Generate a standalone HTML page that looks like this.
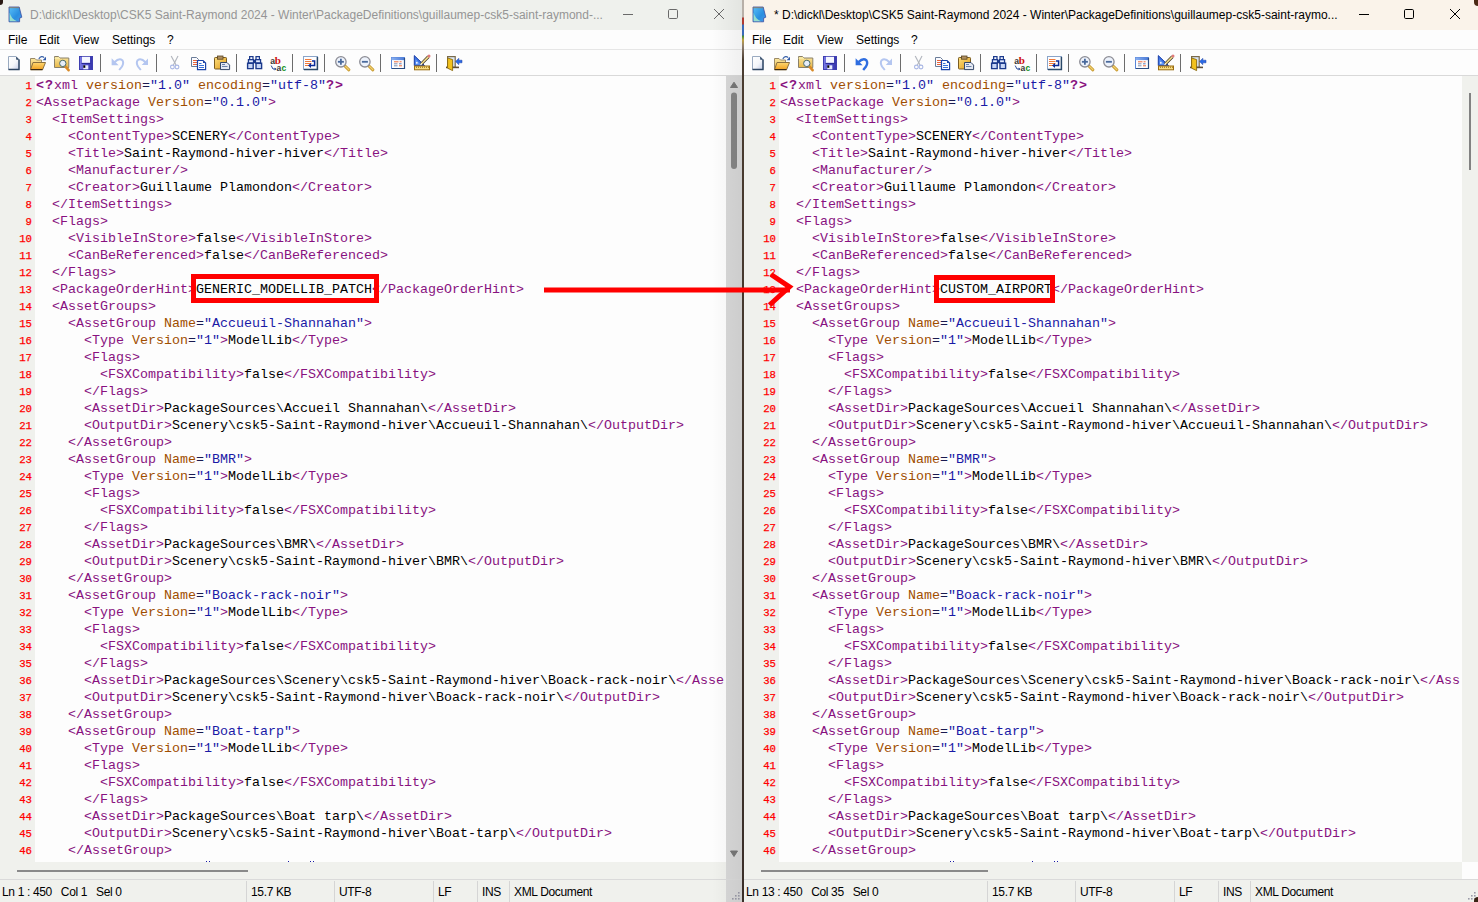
<!DOCTYPE html>
<html><head><meta charset="utf-8"><style>
*{margin:0;padding:0;box-sizing:border-box}
html,body{width:1478px;height:902px;overflow:hidden;background:#3b3222}
body{position:relative;font-family:"Liberation Sans",sans-serif}
.win{position:absolute;top:0;height:902px;background:#fdfdfd;overflow:hidden}
.title{position:absolute;left:0;top:0;right:0;height:30px;background:#eff1ed}
.act .title{background:#faf3ea}
.appicon{position:absolute;left:9px;top:7px;width:14px;height:15px}
.ttext{position:absolute;left:30px;top:8px;font-size:12px;color:#959595;white-space:nowrap;letter-spacing:0}
.act .ttext{color:#000}
.cbtn{position:absolute;top:0;width:16px;height:30px}
.menu{position:absolute;left:0;top:30px;right:0;height:19px;background:#fdfdfd;font-size:12px;color:#000}
.menu span{position:absolute;top:3px}
.dots{position:absolute;left:0;right:0;top:49px;height:1px;background:#e6e6e6}
.toolbar{position:absolute;left:0;right:0;top:50px;height:25px;background:#fdfdfd}
.tbline{position:absolute;left:0;right:0;top:75px;height:1px;background:#d9d9d9}
.editor{position:absolute;left:0;top:76px;height:786px;overflow:hidden;background:#fdfdfd}
.gutter{position:absolute;left:0;top:0;width:35px;height:786px;background:#f0f1ed}
.nm{position:absolute;right:3px;height:17px;line-height:17px;font-family:"Liberation Mono",monospace;font-size:10.67px;color:#f00;margin-top:2px;-webkit-text-stroke:0.25px #f00}
.code{position:absolute;left:36px;top:0;height:786px;overflow:hidden}
.ln{position:absolute;left:0;height:17px;line-height:17px;margin-top:1px;white-space:pre;font-family:"Liberation Mono",monospace;font-size:13.333px;color:#000}
.ln i,.ln b{font-style:normal}
.t{color:#881280}
.a{color:#a04e00}
.e{color:#1a1a50}
.v{color:#1a1aa6}
b.t{font-weight:bold;letter-spacing:1px}
.vscroll{position:absolute;top:76px;width:16px;height:803px;background:#f0f1ed}
.hscroll{position:absolute;left:0;top:862px;height:17px;background:#f0f1ed}
.hthumb{position:absolute;left:17px;top:8px;width:231px;height:2px;background:#8a8a8a}
.status{position:absolute;left:0;right:0;top:879px;height:23px;background:#f0f1ed;border-top:1px solid #dadada;font-size:12px;color:#000}
.status span{position:absolute;top:5px;white-space:nowrap;letter-spacing:-0.35px}
.status .sep{position:absolute;top:1px;width:1px;height:22px;background:#d5d5d5}
.box{position:absolute;border:5px solid #f00}
.dot{position:absolute;width:1px;height:1px;background:#1a1aa6;top:785px}
.shadow{position:absolute;left:712px;top:0;width:30px;height:902px;background:linear-gradient(to right,rgba(0,0,0,0),rgba(0,0,0,0.05))}
.divider{position:absolute;left:742px;top:0;width:2px;height:902px;background:linear-gradient(to bottom,#b8b0a8 0,#b8b0a8 17px,#b03a30 18px,#b03a30 24px,#3a6ab8 25px,#3a6ab8 35px,#3a8a3a 36px,#c0a040 40px,#908070 46px,#4a3c30 60px,#3a2e28 100%)}
.tb{position:absolute;left:0;top:0}

</style></head>
<body>
<div class="win" style="left:0px;width:742px">
  <div class=title>
    <div class=appicon><svg width="16" height="17" viewBox="8 6 16 17" style="position:absolute;left:-1px;top:-1px">
<defs><linearGradient id="gapp" x1="0" y1="0" x2="1" y2="1"><stop offset="0" stop-color="#58c0f8"/><stop offset="0.6" stop-color="#2a8ee0"/><stop offset="1" stop-color="#4a9ae8"/></linearGradient></defs>
<path d="M9,7 H19.2 L21.8,17.2 L19.6,18.2 V21.8 H9 Z" fill="url(#gapp)" stroke="#3a4ca0" stroke-width="0.8"/>
<path d="M9.6,12.5 V21.2 H17 Q11,19 9.6,12.5 Z" fill="#b0f0c8" opacity="0.8"/>
<path d="M9.5,7.6 H19" stroke="#b07a3a" stroke-width="1.2" stroke-dasharray="1,1"/>
</svg></div>
    <div class=ttext>D:\dickl\Desktop\CSK5 Saint-Raymond 2024 - Winter\PackageDefinitions\guillaumep-csk5-saint-raymond-...</div>
    <svg width="742" height="30" style="position:absolute;left:0;top:0">
<line x1="623" y1="14.5" x2="633" y2="14.5" stroke="#6a6a6a" stroke-width="1"/>
<rect x="668.5" y="9.5" width="9" height="9" rx="1.2" fill="none" stroke="#6a6a6a" stroke-width="1"/>
<line x1="714" y1="9" x2="724" y2="19" stroke="#6a6a6a" stroke-width="1"/>
<line x1="724" y1="9" x2="714" y2="19" stroke="#6a6a6a" stroke-width="1"/>
</svg>
  </div>
  <div class=menu><span style="left:8px">File</span><span style="left:39px">Edit</span><span style="left:73px">View</span><span style="left:112px">Settings</span><span style="left:167px">?</span></div>
  <div class=dots></div>
  <div class=toolbar><svg class=tb width="470" height="25" viewBox="0 0 470 25"><line x1="100.5" y1="4" x2="100.5" y2="22" stroke="#6c6c6c" stroke-width="1"/><line x1="156.5" y1="4" x2="156.5" y2="22" stroke="#6c6c6c" stroke-width="1"/><line x1="236.5" y1="4" x2="236.5" y2="22" stroke="#6c6c6c" stroke-width="1"/><line x1="292.5" y1="4" x2="292.5" y2="22" stroke="#6c6c6c" stroke-width="1"/><line x1="324.5" y1="4" x2="324.5" y2="22" stroke="#6c6c6c" stroke-width="1"/><line x1="380.5" y1="4" x2="380.5" y2="22" stroke="#6c6c6c" stroke-width="1"/><line x1="436.5" y1="4" x2="436.5" y2="22" stroke="#6c6c6c" stroke-width="1"/><defs>
<linearGradient id="gdoc" x1="0" y1="0" x2="1" y2="1"><stop offset="0" stop-color="#ffffff"/><stop offset="0.55" stop-color="#f4f6fa"/><stop offset="1" stop-color="#c4cce8"/></linearGradient>
<linearGradient id="gfold" x1="0" y1="0" x2="0" y2="1"><stop offset="0" stop-color="#fbe7a0"/><stop offset="1" stop-color="#e8b848"/></linearGradient>
<linearGradient id="gflap" x1="0" y1="0" x2="0" y2="1"><stop offset="0" stop-color="#ffd870"/><stop offset="1" stop-color="#f0a020"/></linearGradient>
<linearGradient id="gsave" x1="0" y1="0" x2="1" y2="0"><stop offset="0" stop-color="#8080e8"/><stop offset="0.5" stop-color="#5050c8"/><stop offset="1" stop-color="#3434a8"/></linearGradient>
<linearGradient id="gclip" x1="0" y1="0" x2="1" y2="1"><stop offset="0" stop-color="#fde080"/><stop offset="1" stop-color="#e09a18"/></linearGradient>
<linearGradient id="gbar" x1="0" y1="0" x2="1" y2="0"><stop offset="0" stop-color="#8ab0f0"/><stop offset="1" stop-color="#4a7ad8"/></linearGradient>
</defs><path d="M8.5,6.5 H16 L19,9.5 V19.5 H8.5 Z" fill="url(#gdoc)" stroke="#9aaac0" stroke-width="1"/><path d="M19,9.5 V19.5 H8.5" fill="none" stroke="#2c4462" stroke-width="1.4"/><path d="M16,6.5 L19.2,9.7 L16.3,9.7 Z" fill="#2c4462"/><path d="M30.5,8.5 H35 L36.5,10 H41.5 V19.5 H30.5 Z" fill="url(#gfold)" stroke="#9a8a68" stroke-width="1"/><path d="M33,12.5 H45.5 L42.5,19.8 H30.5 Z" fill="url(#gflap)" stroke="#8a7040" stroke-width="1"/><path d="M30.8,19.6 H42.5" stroke="#302010" stroke-width="1"/><path d="M38.8,8.8 Q41.5,5.2 44.2,7.6" fill="none" stroke="#3a62a8" stroke-width="1.2"/><path d="M46,6.8 L46,10.2 L42.6,10.2 Z" fill="#2e58a8"/><path d="M54.5,6.5 H58.5 L60,8 H68.8 V17.5 H54.5 Z" fill="url(#gfold)" stroke="#8a8068" stroke-width="1"/><path d="M54.5,8.2 H60" stroke="#f8f0b0" stroke-width="1"/><line x1="65.3" y1="16.3" x2="68.6" y2="20.2" stroke="#d88a28" stroke-width="2.6" stroke-linecap="round"/><circle cx="62.8" cy="13.4" r="3.2" fill="#e6eefa" stroke="#4a6a68" stroke-width="1"/><rect x="79" y="6" width="14" height="14" fill="url(#gsave)"/><rect x="79.5" y="6.5" width="13" height="13" fill="none" stroke="#3e3eb0" stroke-width="1"/><rect x="82" y="6.8" width="8" height="6" fill="#f4f6ff"/><rect x="81.5" y="13" width="9" height="1" fill="#2a2a98"/><rect x="83.3" y="15.3" width="5" height="4" fill="#e8ecff"/><rect x="83.3" y="15.3" width="2" height="2.5" fill="#000"/><path d="M111.6,8.3 L111.6,15.3 L118.6,15.3 Z" fill="#b4c6f0"/><path d="M114.5,12.2 Q119,7.6 122.3,10.2 Q124.2,12.8 122,16.5 L119.2,20" fill="none" stroke="#b4c6f0" stroke-width="2"/><path d="M148,8.5 L148,15 L141.7,15 Z" fill="#b4c6f0"/><path d="M145.5,12.2 Q141,7.6 137.7,10.2 Q135.8,12.8 138,16.5 L140.8,20" fill="none" stroke="#b4c6f0" stroke-width="2"/><line x1="171.2" y1="6" x2="176" y2="15" stroke="#b0b4bc" stroke-width="1.1"/><line x1="178" y1="6" x2="173.4" y2="15" stroke="#b0b4bc" stroke-width="1.1"/><circle cx="172.4" cy="17" r="1.9" fill="none" stroke="#a8b6e4" stroke-width="1.1"/><circle cx="177" cy="17" r="1.9" fill="none" stroke="#a8b6e4" stroke-width="1.1"/><path d="M191.5,7.5 H196.5 L198.5,9.5 V16.5 H191.5 Z" fill="#fbfbff" stroke="#6a7c98" stroke-width="1"/><line x1="193" y1="10.5" x2="197.5" y2="10.5" stroke="#e8643a" stroke-width="1"/><line x1="193" y1="12.5" x2="197.5" y2="12.5" stroke="#e8643a" stroke-width="1"/><line x1="193" y1="14.5" x2="197.5" y2="14.5" stroke="#e8643a" stroke-width="1"/><path d="M197.5,10.5 H203 L205.6,13.1 V19.6 H197.5 Z" fill="#fdfdff" stroke="#1c44a8" stroke-width="1.2"/><path d="M203,10.5 L205.6,13.1 H203 Z" fill="#1c44a8"/><line x1="199" y1="13.5" x2="201.5" y2="13.5" stroke="#3a72d8" stroke-width="1"/><line x1="199" y1="15.5" x2="204" y2="15.5" stroke="#3a72d8" stroke-width="1"/><line x1="199" y1="17.5" x2="204" y2="17.5" stroke="#3a72d8" stroke-width="1"/><rect x="214.5" y="7.5" width="12" height="11.5" rx="0.8" fill="url(#gclip)" stroke="#7a5c22" stroke-width="1"/><rect x="217.5" y="6" width="5.5" height="3.2" fill="#b09060" stroke="#5a4422" stroke-width="0.8"/><path d="M220.5,12.5 H227 L229.6,15.1 V19.6 H220.5 Z" fill="#e4e8f2" stroke="#34486a" stroke-width="1"/><line x1="222" y1="14.5" x2="225" y2="14.5" stroke="#6a80a8" stroke-width="1"/><line x1="222" y1="16.5" x2="227.5" y2="16.5" stroke="#6a80a8" stroke-width="1"/><path d="M249.6,6.6 H253 V9.6 H249.6 Z" fill="#e8eeff" stroke="#1c3a8c" stroke-width="1.2"/><path d="M248.4,9.6 H253.6 V13.2 H248.4 Z" fill="#b8c8f0" stroke="#1c3a8c" stroke-width="1.2"/><path d="M247.6,13.2 H253.2 V18.6 H247.6 Z" fill="#c8d6f6" stroke="#1c3a8c" stroke-width="1.4"/><path d="M256,6.6 H259.4 V9.6 H256 Z" fill="#e8eeff" stroke="#1c3a8c" stroke-width="1.2"/><path d="M255.4,9.6 H260.6 V13.2 H255.4 Z" fill="#b8c8f0" stroke="#1c3a8c" stroke-width="1.2"/><path d="M256,13.2 H261.6 V18.6 H256 Z" fill="#c8d6f6" stroke="#1c3a8c" stroke-width="1.4"/><rect x="253" y="10" width="3" height="3" fill="#1c3a8c"/><rect x="251" y="7.6" width="1" height="1" fill="#fff"/><rect x="257.4" y="7.6" width="1" height="1" fill="#fff"/><rect x="249.5" y="10.8" width="3" height="1" fill="#f4f8ff"/><rect x="256.5" y="10.8" width="3" height="1" fill="#f4f8ff"/><text x="270.3" y="64" transform="translate(0,-50)" font-family="Liberation Sans" font-weight="bold" font-size="8.6" fill="#383838">a</text><text x="274.8" y="64" transform="translate(0,-50)" font-family="Liberation Serif" font-weight="bold" font-size="11" fill="#d01010">b</text><path d="M271.2,15.6 L273,19 H276" fill="none" stroke="#2a4a98" stroke-width="1"/><path d="M276.5,19 L274.6,17.6 V20.4 Z" fill="#2a4a98"/><text x="276.4" y="70.8" transform="translate(0,-50)" font-family="Liberation Sans" font-weight="bold" font-size="8.5" fill="#383838">a</text><text x="281.6" y="70.8" transform="translate(0,-50)" font-family="Liberation Sans" font-weight="bold" font-size="8.5" fill="#10901a">c</text><rect x="303.5" y="6.5" width="14" height="13" fill="#fdfdff" stroke="#8aa4c8" stroke-width="1"/><path d="M317.4,7 V19.4 H304" fill="none" stroke="#2a4868" stroke-width="1.5"/><line x1="305" y1="9.5" x2="311.5" y2="9.5" stroke="#f07a3a" stroke-width="1"/><line x1="305" y1="11.5" x2="311.5" y2="11.5" stroke="#f07a3a" stroke-width="1"/><line x1="305" y1="13.5" x2="311.5" y2="13.5" stroke="#f07a3a" stroke-width="1"/><line x1="305" y1="15.5" x2="309.5" y2="15.5" stroke="#f07a3a" stroke-width="1"/><path d="M312,11 H314.6 V15.5 H310.5" fill="none" stroke="#0a2a98" stroke-width="1.5"/><path d="M308,15.5 L311,13 V18 Z" fill="#0a2a98"/><line x1="345.29999999999995" y1="16.3" x2="348.9" y2="19.8" stroke="#c89a30" stroke-width="3" stroke-linecap="round"/><line x1="345.29999999999995" y1="16.3" x2="348.9" y2="19.8" stroke="#f0d070" stroke-width="1.2" stroke-linecap="round"/><circle cx="340.9" cy="11.8" r="5.2" fill="#edf2fb" stroke="#8c8c94" stroke-width="1.3"/><line x1="337.9" y1="11.8" x2="343.9" y2="11.8" stroke="#4a6a9c" stroke-width="1.8"/><line x1="340.9" y1="8.8" x2="340.9" y2="14.8" stroke="#4a6a9c" stroke-width="1.8"/><line x1="369.29999999999995" y1="16.3" x2="372.9" y2="19.8" stroke="#c89a30" stroke-width="3" stroke-linecap="round"/><line x1="369.29999999999995" y1="16.3" x2="372.9" y2="19.8" stroke="#f0d070" stroke-width="1.2" stroke-linecap="round"/><circle cx="364.9" cy="11.8" r="5.2" fill="#edf2fb" stroke="#8c8c94" stroke-width="1.3"/><line x1="361.9" y1="11.8" x2="367.9" y2="11.8" stroke="#4a6a9c" stroke-width="1.8"/><rect x="391.5" y="7.5" width="13" height="11" fill="#fdfdff" stroke="#5a86d8" stroke-width="1"/><rect x="391.5" y="7.5" width="13" height="2.6" fill="url(#gbar)"/><path d="M404.5,8 V18.5 H392" fill="none" stroke="#2c4c80" stroke-width="1.2"/><line x1="394" y1="11.8" x2="398.5" y2="11.8" stroke="#f06a3a" stroke-width="1"/><line x1="399.6" y1="11.8" x2="401.6" y2="11.8" stroke="#f06a3a" stroke-width="1"/><line x1="394" y1="13.8" x2="397.5" y2="13.8" stroke="#8090b0" stroke-width="1"/><line x1="399" y1="13.8" x2="401.6" y2="13.8" stroke="#6080b8" stroke-width="1"/><line x1="394" y1="15.8" x2="397.5" y2="15.8" stroke="#8090b0" stroke-width="1"/><line x1="399" y1="15.8" x2="402" y2="15.8" stroke="#f06a3a" stroke-width="1"/><path d="M414.3,5.6 L414.3,15.6 L424.6,15.6 Z" fill="#3c74e4" stroke="#1a3ea8" stroke-width="1"/><path d="M415.6,9.2 L415.6,14.4 L420.6,14.4 Z" fill="#6a9cf4"/><circle cx="416.8" cy="12.8" r="0.9" fill="#fff"/><rect x="414.5" y="16" width="15" height="3.8" fill="#f8dc80" stroke="#9a6c10" stroke-width="1"/><line x1="416.5" y1="16.5" x2="416.5" y2="18" stroke="#a07418" stroke-width="0.8"/><line x1="418.5" y1="16.5" x2="418.5" y2="18" stroke="#a07418" stroke-width="0.8"/><line x1="420.5" y1="16.5" x2="420.5" y2="18" stroke="#a07418" stroke-width="0.8"/><line x1="422.5" y1="16.5" x2="422.5" y2="18" stroke="#a07418" stroke-width="0.8"/><line x1="424.5" y1="16.5" x2="424.5" y2="18" stroke="#a07418" stroke-width="0.8"/><line x1="426.5" y1="16.5" x2="426.5" y2="18" stroke="#a07418" stroke-width="0.8"/><line x1="428.5" y1="16.5" x2="428.5" y2="18" stroke="#a07418" stroke-width="0.8"/><line x1="421" y1="14.2" x2="428.5" y2="6.6" stroke="#3a3020" stroke-width="3"/><line x1="421" y1="14.2" x2="428.5" y2="6.6" stroke="#f4dc8a" stroke-width="1.6"/><circle cx="429" cy="6" r="1.5" fill="#e07a7a"/><path d="M420,15.2 L421.2,13 L422.4,14.2 Z" fill="#fff"/><rect x="447.6" y="6.6" width="7.6" height="10.8" fill="#dae6f6" stroke="#7a6a4a" stroke-width="1.2"/><line x1="446" y1="17.4" x2="459" y2="17.4" stroke="#5e4e38" stroke-width="1.6"/><path d="M447.6,8 L452.6,9.6 L452.6,20.6 L447.6,18.2 Z" fill="#f2c21e" stroke="#8a6a10" stroke-width="0.9"/><path d="M455.6,11.5 L458.8,8.3 V10.2 H462 V12.8 H458.8 V14.7 Z" fill="#2a6ae8" stroke="#1a3ea0" stroke-width="0.5"/></svg></div>
  <div class=tbline></div>
  <div class=editor style="width:726px">
    <div class=gutter><div class=nm style="top:0px">1</div><div class=nm style="top:17px">2</div><div class=nm style="top:34px">3</div><div class=nm style="top:51px">4</div><div class=nm style="top:68px">5</div><div class=nm style="top:85px">6</div><div class=nm style="top:102px">7</div><div class=nm style="top:119px">8</div><div class=nm style="top:136px">9</div><div class=nm style="top:153px">10</div><div class=nm style="top:170px">11</div><div class=nm style="top:187px">12</div><div class=nm style="top:204px">13</div><div class=nm style="top:221px">14</div><div class=nm style="top:238px">15</div><div class=nm style="top:255px">16</div><div class=nm style="top:272px">17</div><div class=nm style="top:289px">18</div><div class=nm style="top:306px">19</div><div class=nm style="top:323px">20</div><div class=nm style="top:340px">21</div><div class=nm style="top:357px">22</div><div class=nm style="top:374px">23</div><div class=nm style="top:391px">24</div><div class=nm style="top:408px">25</div><div class=nm style="top:425px">26</div><div class=nm style="top:442px">27</div><div class=nm style="top:459px">28</div><div class=nm style="top:476px">29</div><div class=nm style="top:493px">30</div><div class=nm style="top:510px">31</div><div class=nm style="top:527px">32</div><div class=nm style="top:544px">33</div><div class=nm style="top:561px">34</div><div class=nm style="top:578px">35</div><div class=nm style="top:595px">36</div><div class=nm style="top:612px">37</div><div class=nm style="top:629px">38</div><div class=nm style="top:646px">39</div><div class=nm style="top:663px">40</div><div class=nm style="top:680px">41</div><div class=nm style="top:697px">42</div><div class=nm style="top:714px">43</div><div class=nm style="top:731px">44</div><div class=nm style="top:748px">45</div><div class=nm style="top:765px">46</div><div class=nm style="top:782px">47</div></div>
    <div class=code style="width:688px"><div class=ln style="top:0px"><b class=t>&lt;?</b><i class=t>xml</i> <i class=a>version</i><i class=e>=</i><i class=v>"1.0"</i> <i class=a>encoding</i><i class=e>=</i><i class=v>"utf-8"</i><b class=t>?&gt;</b></div><div class=ln style="top:17px"><i class=t>&lt;</i><i class=t>AssetPackage</i> <i class=a>Version</i><i class=e>=</i><i class=v>"0.1.0"</i><i class=t>&gt;</i></div><div class=ln style="top:34px">  <i class=t>&lt;</i><i class=t>ItemSettings</i><i class=t>&gt;</i></div><div class=ln style="top:51px">    <i class=t>&lt;</i><i class=t>ContentType</i><i class=t>&gt;</i>SCENERY<i class=t>&lt;/</i><i class=t>ContentType</i><i class=t>&gt;</i></div><div class=ln style="top:68px">    <i class=t>&lt;</i><i class=t>Title</i><i class=t>&gt;</i>Saint-Raymond-hiver-hiver<i class=t>&lt;/</i><i class=t>Title</i><i class=t>&gt;</i></div><div class=ln style="top:85px">    <i class=t>&lt;</i><i class=t>Manufacturer</i><i class=t>/&gt;</i></div><div class=ln style="top:102px">    <i class=t>&lt;</i><i class=t>Creator</i><i class=t>&gt;</i>Guillaume Plamondon<i class=t>&lt;/</i><i class=t>Creator</i><i class=t>&gt;</i></div><div class=ln style="top:119px">  <i class=t>&lt;/</i><i class=t>ItemSettings</i><i class=t>&gt;</i></div><div class=ln style="top:136px">  <i class=t>&lt;</i><i class=t>Flags</i><i class=t>&gt;</i></div><div class=ln style="top:153px">    <i class=t>&lt;</i><i class=t>VisibleInStore</i><i class=t>&gt;</i>false<i class=t>&lt;/</i><i class=t>VisibleInStore</i><i class=t>&gt;</i></div><div class=ln style="top:170px">    <i class=t>&lt;</i><i class=t>CanBeReferenced</i><i class=t>&gt;</i>false<i class=t>&lt;/</i><i class=t>CanBeReferenced</i><i class=t>&gt;</i></div><div class=ln style="top:187px">  <i class=t>&lt;/</i><i class=t>Flags</i><i class=t>&gt;</i></div><div class=ln style="top:204px">  <i class=t>&lt;</i><i class=t>PackageOrderHint</i><i class=t>&gt;</i>GENERIC_MODELLIB_PATCH<i class=t>&lt;/</i><i class=t>PackageOrderHint</i><i class=t>&gt;</i></div><div class=ln style="top:221px">  <i class=t>&lt;</i><i class=t>AssetGroups</i><i class=t>&gt;</i></div><div class=ln style="top:238px">    <i class=t>&lt;</i><i class=t>AssetGroup</i> <i class=a>Name</i><i class=e>=</i><i class=v>"Accueuil-Shannahan"</i><i class=t>&gt;</i></div><div class=ln style="top:255px">      <i class=t>&lt;</i><i class=t>Type</i> <i class=a>Version</i><i class=e>=</i><i class=v>"1"</i><i class=t>&gt;</i>ModelLib<i class=t>&lt;/</i><i class=t>Type</i><i class=t>&gt;</i></div><div class=ln style="top:272px">      <i class=t>&lt;</i><i class=t>Flags</i><i class=t>&gt;</i></div><div class=ln style="top:289px">        <i class=t>&lt;</i><i class=t>FSXCompatibility</i><i class=t>&gt;</i>false<i class=t>&lt;/</i><i class=t>FSXCompatibility</i><i class=t>&gt;</i></div><div class=ln style="top:306px">      <i class=t>&lt;/</i><i class=t>Flags</i><i class=t>&gt;</i></div><div class=ln style="top:323px">      <i class=t>&lt;</i><i class=t>AssetDir</i><i class=t>&gt;</i>PackageSources\Accueil Shannahan\<i class=t>&lt;/</i><i class=t>AssetDir</i><i class=t>&gt;</i></div><div class=ln style="top:340px">      <i class=t>&lt;</i><i class=t>OutputDir</i><i class=t>&gt;</i>Scenery\csk5-Saint-Raymond-hiver\Accueuil-Shannahan\<i class=t>&lt;/</i><i class=t>OutputDir</i><i class=t>&gt;</i></div><div class=ln style="top:357px">    <i class=t>&lt;/</i><i class=t>AssetGroup</i><i class=t>&gt;</i></div><div class=ln style="top:374px">    <i class=t>&lt;</i><i class=t>AssetGroup</i> <i class=a>Name</i><i class=e>=</i><i class=v>"BMR"</i><i class=t>&gt;</i></div><div class=ln style="top:391px">      <i class=t>&lt;</i><i class=t>Type</i> <i class=a>Version</i><i class=e>=</i><i class=v>"1"</i><i class=t>&gt;</i>ModelLib<i class=t>&lt;/</i><i class=t>Type</i><i class=t>&gt;</i></div><div class=ln style="top:408px">      <i class=t>&lt;</i><i class=t>Flags</i><i class=t>&gt;</i></div><div class=ln style="top:425px">        <i class=t>&lt;</i><i class=t>FSXCompatibility</i><i class=t>&gt;</i>false<i class=t>&lt;/</i><i class=t>FSXCompatibility</i><i class=t>&gt;</i></div><div class=ln style="top:442px">      <i class=t>&lt;/</i><i class=t>Flags</i><i class=t>&gt;</i></div><div class=ln style="top:459px">      <i class=t>&lt;</i><i class=t>AssetDir</i><i class=t>&gt;</i>PackageSources\BMR\<i class=t>&lt;/</i><i class=t>AssetDir</i><i class=t>&gt;</i></div><div class=ln style="top:476px">      <i class=t>&lt;</i><i class=t>OutputDir</i><i class=t>&gt;</i>Scenery\csk5-Saint-Raymond-hiver\BMR\<i class=t>&lt;/</i><i class=t>OutputDir</i><i class=t>&gt;</i></div><div class=ln style="top:493px">    <i class=t>&lt;/</i><i class=t>AssetGroup</i><i class=t>&gt;</i></div><div class=ln style="top:510px">    <i class=t>&lt;</i><i class=t>AssetGroup</i> <i class=a>Name</i><i class=e>=</i><i class=v>"Boack-rack-noir"</i><i class=t>&gt;</i></div><div class=ln style="top:527px">      <i class=t>&lt;</i><i class=t>Type</i> <i class=a>Version</i><i class=e>=</i><i class=v>"1"</i><i class=t>&gt;</i>ModelLib<i class=t>&lt;/</i><i class=t>Type</i><i class=t>&gt;</i></div><div class=ln style="top:544px">      <i class=t>&lt;</i><i class=t>Flags</i><i class=t>&gt;</i></div><div class=ln style="top:561px">        <i class=t>&lt;</i><i class=t>FSXCompatibility</i><i class=t>&gt;</i>false<i class=t>&lt;/</i><i class=t>FSXCompatibility</i><i class=t>&gt;</i></div><div class=ln style="top:578px">      <i class=t>&lt;/</i><i class=t>Flags</i><i class=t>&gt;</i></div><div class=ln style="top:595px">      <i class=t>&lt;</i><i class=t>AssetDir</i><i class=t>&gt;</i>PackageSources\Scenery\csk5-Saint-Raymond-hiver\Boack-rack-noir\<i class=t>&lt;/</i><i class=t>AssetDir</i><i class=t>&gt;</i></div><div class=ln style="top:612px">      <i class=t>&lt;</i><i class=t>OutputDir</i><i class=t>&gt;</i>Scenery\csk5-Saint-Raymond-hiver\Boack-rack-noir\<i class=t>&lt;/</i><i class=t>OutputDir</i><i class=t>&gt;</i></div><div class=ln style="top:629px">    <i class=t>&lt;/</i><i class=t>AssetGroup</i><i class=t>&gt;</i></div><div class=ln style="top:646px">    <i class=t>&lt;</i><i class=t>AssetGroup</i> <i class=a>Name</i><i class=e>=</i><i class=v>"Boat-tarp"</i><i class=t>&gt;</i></div><div class=ln style="top:663px">      <i class=t>&lt;</i><i class=t>Type</i> <i class=a>Version</i><i class=e>=</i><i class=v>"1"</i><i class=t>&gt;</i>ModelLib<i class=t>&lt;/</i><i class=t>Type</i><i class=t>&gt;</i></div><div class=ln style="top:680px">      <i class=t>&lt;</i><i class=t>Flags</i><i class=t>&gt;</i></div><div class=ln style="top:697px">        <i class=t>&lt;</i><i class=t>FSXCompatibility</i><i class=t>&gt;</i>false<i class=t>&lt;/</i><i class=t>FSXCompatibility</i><i class=t>&gt;</i></div><div class=ln style="top:714px">      <i class=t>&lt;/</i><i class=t>Flags</i><i class=t>&gt;</i></div><div class=ln style="top:731px">      <i class=t>&lt;</i><i class=t>AssetDir</i><i class=t>&gt;</i>PackageSources\Boat tarp\<i class=t>&lt;/</i><i class=t>AssetDir</i><i class=t>&gt;</i></div><div class=ln style="top:748px">      <i class=t>&lt;</i><i class=t>OutputDir</i><i class=t>&gt;</i>Scenery\csk5-Saint-Raymond-hiver\Boat-tarp\<i class=t>&lt;/</i><i class=t>OutputDir</i><i class=t>&gt;</i></div><div class=ln style="top:765px">    <i class=t>&lt;/</i><i class=t>AssetGroup</i><i class=t>&gt;</i></div><div class=ln style="top:782px">    <i class=t>&lt;</i><i class=t>AssetGroup</i> <i class=a>Name</i><i class=e>=</i><i class=v>"Canoe-wooden"</i><i class=t>&gt;</i></div></div>
    <div class=box style="left:191px;top:198px;width:188px;height:29px"></div>
    <i class=dot style="left:206px"></i><i class=dot style="left:209px"></i><i class=dot style="left:288px"></i><i class=dot style="left:310px"></i><i class=dot style="left:313px"></i>
  </div>
  <div class=vscroll style="left:726px;background:#d8d8d8;height:803px"><svg width="16" height="803" style="position:absolute;left:0;top:0">
<path d="M4.5,11.5 L8,6.2 L11.5,11.5 Z" fill="#777" stroke="#777" stroke-width="1" stroke-linejoin="round"/>
<rect x="5" y="16.5" width="6" height="76.5" rx="3" fill="#858585"/>
<path d="M4.5,775 L11.5,775 L8,780.5 Z" fill="#777" stroke="#777" stroke-width="1" stroke-linejoin="round"/>
</svg></div>
  <div class=hscroll style="width:726px"><div class=hthumb style="width:231px"></div></div>
  <div class=status><span style="left:2px">Ln 1 : 450&nbsp;&nbsp;&nbsp;Col 1&nbsp;&nbsp;&nbsp;Sel 0</span><i class=sep style="left:246px"></i><span style="left:251px">15.7 KB</span><i class=sep style="left:334px"></i><span style="left:339px">UTF-8</span><i class=sep style="left:433px"></i><span style="left:438px">LF</span><i class=sep style="left:477px"></i><span style="left:482px">INS</span><i class=sep style="left:509px"></i><span style="left:514px">XML Document</span></div>
  <div style="position:absolute;left:726px;top:880px;width:16px;height:22px;background:#d8d8d8"></div><svg width="10" height="10" style="position:absolute;left:732px;top:892px"><rect x="6" y="0" width="1.6" height="1.6" fill="#9a9aa8"/><rect x="6" y="3" width="1.6" height="1.6" fill="#9a9aa8"/><rect x="3" y="3" width="1.6" height="1.6" fill="#9a9aa8"/><rect x="6" y="6" width="1.6" height="1.6" fill="#9a9aa8"/><rect x="3" y="6" width="1.6" height="1.6" fill="#9a9aa8"/><rect x="0" y="6" width="1.6" height="1.6" fill="#9a9aa8"/></svg>
</div><div class=shadow></div>
<div class="win act" style="left:744px;width:734px">
  <div class=title>
    <div class=appicon><svg width="16" height="17" viewBox="8 6 16 17" style="position:absolute;left:-1px;top:-1px">
<defs><linearGradient id="gapp" x1="0" y1="0" x2="1" y2="1"><stop offset="0" stop-color="#58c0f8"/><stop offset="0.6" stop-color="#2a8ee0"/><stop offset="1" stop-color="#4a9ae8"/></linearGradient></defs>
<path d="M9,7 H19.2 L21.8,17.2 L19.6,18.2 V21.8 H9 Z" fill="url(#gapp)" stroke="#3a4ca0" stroke-width="0.8"/>
<path d="M9.6,12.5 V21.2 H17 Q11,19 9.6,12.5 Z" fill="#b0f0c8" opacity="0.8"/>
<path d="M9.5,7.6 H19" stroke="#b07a3a" stroke-width="1.2" stroke-dasharray="1,1"/>
</svg></div>
    <div class=ttext>* D:\dickl\Desktop\CSK5 Saint-Raymond 2024 - Winter\PackageDefinitions\guillaumep-csk5-saint-raymo...</div>
    <svg width="734" height="30" style="position:absolute;left:0;top:0">
<line x1="615" y1="14.5" x2="625" y2="14.5" stroke="#000" stroke-width="1"/>
<rect x="660.5" y="9.5" width="9" height="9" rx="1.2" fill="none" stroke="#000" stroke-width="1"/>
<line x1="706" y1="9" x2="716" y2="19" stroke="#000" stroke-width="1"/>
<line x1="716" y1="9" x2="706" y2="19" stroke="#000" stroke-width="1"/>
</svg>
  </div>
  <div class=menu><span style="left:8px">File</span><span style="left:39px">Edit</span><span style="left:73px">View</span><span style="left:112px">Settings</span><span style="left:167px">?</span></div>
  <div class=dots></div>
  <div class=toolbar><svg class=tb width="470" height="25" viewBox="0 0 470 25"><line x1="100.5" y1="4" x2="100.5" y2="22" stroke="#6c6c6c" stroke-width="1"/><line x1="156.5" y1="4" x2="156.5" y2="22" stroke="#6c6c6c" stroke-width="1"/><line x1="236.5" y1="4" x2="236.5" y2="22" stroke="#6c6c6c" stroke-width="1"/><line x1="292.5" y1="4" x2="292.5" y2="22" stroke="#6c6c6c" stroke-width="1"/><line x1="324.5" y1="4" x2="324.5" y2="22" stroke="#6c6c6c" stroke-width="1"/><line x1="380.5" y1="4" x2="380.5" y2="22" stroke="#6c6c6c" stroke-width="1"/><line x1="436.5" y1="4" x2="436.5" y2="22" stroke="#6c6c6c" stroke-width="1"/><defs>
<linearGradient id="gdoc" x1="0" y1="0" x2="1" y2="1"><stop offset="0" stop-color="#ffffff"/><stop offset="0.55" stop-color="#f4f6fa"/><stop offset="1" stop-color="#c4cce8"/></linearGradient>
<linearGradient id="gfold" x1="0" y1="0" x2="0" y2="1"><stop offset="0" stop-color="#fbe7a0"/><stop offset="1" stop-color="#e8b848"/></linearGradient>
<linearGradient id="gflap" x1="0" y1="0" x2="0" y2="1"><stop offset="0" stop-color="#ffd870"/><stop offset="1" stop-color="#f0a020"/></linearGradient>
<linearGradient id="gsave" x1="0" y1="0" x2="1" y2="0"><stop offset="0" stop-color="#8080e8"/><stop offset="0.5" stop-color="#5050c8"/><stop offset="1" stop-color="#3434a8"/></linearGradient>
<linearGradient id="gclip" x1="0" y1="0" x2="1" y2="1"><stop offset="0" stop-color="#fde080"/><stop offset="1" stop-color="#e09a18"/></linearGradient>
<linearGradient id="gbar" x1="0" y1="0" x2="1" y2="0"><stop offset="0" stop-color="#8ab0f0"/><stop offset="1" stop-color="#4a7ad8"/></linearGradient>
</defs><path d="M8.5,6.5 H16 L19,9.5 V19.5 H8.5 Z" fill="url(#gdoc)" stroke="#9aaac0" stroke-width="1"/><path d="M19,9.5 V19.5 H8.5" fill="none" stroke="#2c4462" stroke-width="1.4"/><path d="M16,6.5 L19.2,9.7 L16.3,9.7 Z" fill="#2c4462"/><path d="M30.5,8.5 H35 L36.5,10 H41.5 V19.5 H30.5 Z" fill="url(#gfold)" stroke="#9a8a68" stroke-width="1"/><path d="M33,12.5 H45.5 L42.5,19.8 H30.5 Z" fill="url(#gflap)" stroke="#8a7040" stroke-width="1"/><path d="M30.8,19.6 H42.5" stroke="#302010" stroke-width="1"/><path d="M38.8,8.8 Q41.5,5.2 44.2,7.6" fill="none" stroke="#3a62a8" stroke-width="1.2"/><path d="M46,6.8 L46,10.2 L42.6,10.2 Z" fill="#2e58a8"/><path d="M54.5,6.5 H58.5 L60,8 H68.8 V17.5 H54.5 Z" fill="url(#gfold)" stroke="#8a8068" stroke-width="1"/><path d="M54.5,8.2 H60" stroke="#f8f0b0" stroke-width="1"/><line x1="65.3" y1="16.3" x2="68.6" y2="20.2" stroke="#d88a28" stroke-width="2.6" stroke-linecap="round"/><circle cx="62.8" cy="13.4" r="3.2" fill="#e6eefa" stroke="#4a6a68" stroke-width="1"/><rect x="79" y="6" width="14" height="14" fill="url(#gsave)"/><rect x="79.5" y="6.5" width="13" height="13" fill="none" stroke="#3e3eb0" stroke-width="1"/><rect x="82" y="6.8" width="8" height="6" fill="#f4f6ff"/><rect x="81.5" y="13" width="9" height="1" fill="#2a2a98"/><rect x="83.3" y="15.3" width="5" height="4" fill="#e8ecff"/><rect x="83.3" y="15.3" width="2" height="2.5" fill="#000"/><path d="M111.6,8.3 L111.6,15.3 L118.6,15.3 Z" fill="#2f6ee0"/><path d="M114.5,12.2 Q119,7.6 122.3,10.2 Q124.2,12.8 122,16.5 L119.2,20" fill="none" stroke="#2f6ee0" stroke-width="2.4"/><path d="M148,8.5 L148,15 L141.7,15 Z" fill="#b4c6f0"/><path d="M145.5,12.2 Q141,7.6 137.7,10.2 Q135.8,12.8 138,16.5 L140.8,20" fill="none" stroke="#b4c6f0" stroke-width="2"/><line x1="171.2" y1="6" x2="176" y2="15" stroke="#b0b4bc" stroke-width="1.1"/><line x1="178" y1="6" x2="173.4" y2="15" stroke="#b0b4bc" stroke-width="1.1"/><circle cx="172.4" cy="17" r="1.9" fill="none" stroke="#a8b6e4" stroke-width="1.1"/><circle cx="177" cy="17" r="1.9" fill="none" stroke="#a8b6e4" stroke-width="1.1"/><path d="M191.5,7.5 H196.5 L198.5,9.5 V16.5 H191.5 Z" fill="#fbfbff" stroke="#6a7c98" stroke-width="1"/><line x1="193" y1="10.5" x2="197.5" y2="10.5" stroke="#e8643a" stroke-width="1"/><line x1="193" y1="12.5" x2="197.5" y2="12.5" stroke="#e8643a" stroke-width="1"/><line x1="193" y1="14.5" x2="197.5" y2="14.5" stroke="#e8643a" stroke-width="1"/><path d="M197.5,10.5 H203 L205.6,13.1 V19.6 H197.5 Z" fill="#fdfdff" stroke="#1c44a8" stroke-width="1.2"/><path d="M203,10.5 L205.6,13.1 H203 Z" fill="#1c44a8"/><line x1="199" y1="13.5" x2="201.5" y2="13.5" stroke="#3a72d8" stroke-width="1"/><line x1="199" y1="15.5" x2="204" y2="15.5" stroke="#3a72d8" stroke-width="1"/><line x1="199" y1="17.5" x2="204" y2="17.5" stroke="#3a72d8" stroke-width="1"/><rect x="214.5" y="7.5" width="12" height="11.5" rx="0.8" fill="url(#gclip)" stroke="#7a5c22" stroke-width="1"/><rect x="217.5" y="6" width="5.5" height="3.2" fill="#b09060" stroke="#5a4422" stroke-width="0.8"/><path d="M220.5,12.5 H227 L229.6,15.1 V19.6 H220.5 Z" fill="#e4e8f2" stroke="#34486a" stroke-width="1"/><line x1="222" y1="14.5" x2="225" y2="14.5" stroke="#6a80a8" stroke-width="1"/><line x1="222" y1="16.5" x2="227.5" y2="16.5" stroke="#6a80a8" stroke-width="1"/><path d="M249.6,6.6 H253 V9.6 H249.6 Z" fill="#e8eeff" stroke="#1c3a8c" stroke-width="1.2"/><path d="M248.4,9.6 H253.6 V13.2 H248.4 Z" fill="#b8c8f0" stroke="#1c3a8c" stroke-width="1.2"/><path d="M247.6,13.2 H253.2 V18.6 H247.6 Z" fill="#c8d6f6" stroke="#1c3a8c" stroke-width="1.4"/><path d="M256,6.6 H259.4 V9.6 H256 Z" fill="#e8eeff" stroke="#1c3a8c" stroke-width="1.2"/><path d="M255.4,9.6 H260.6 V13.2 H255.4 Z" fill="#b8c8f0" stroke="#1c3a8c" stroke-width="1.2"/><path d="M256,13.2 H261.6 V18.6 H256 Z" fill="#c8d6f6" stroke="#1c3a8c" stroke-width="1.4"/><rect x="253" y="10" width="3" height="3" fill="#1c3a8c"/><rect x="251" y="7.6" width="1" height="1" fill="#fff"/><rect x="257.4" y="7.6" width="1" height="1" fill="#fff"/><rect x="249.5" y="10.8" width="3" height="1" fill="#f4f8ff"/><rect x="256.5" y="10.8" width="3" height="1" fill="#f4f8ff"/><text x="270.3" y="64" transform="translate(0,-50)" font-family="Liberation Sans" font-weight="bold" font-size="8.6" fill="#383838">a</text><text x="274.8" y="64" transform="translate(0,-50)" font-family="Liberation Serif" font-weight="bold" font-size="11" fill="#d01010">b</text><path d="M271.2,15.6 L273,19 H276" fill="none" stroke="#2a4a98" stroke-width="1"/><path d="M276.5,19 L274.6,17.6 V20.4 Z" fill="#2a4a98"/><text x="276.4" y="70.8" transform="translate(0,-50)" font-family="Liberation Sans" font-weight="bold" font-size="8.5" fill="#383838">a</text><text x="281.6" y="70.8" transform="translate(0,-50)" font-family="Liberation Sans" font-weight="bold" font-size="8.5" fill="#10901a">c</text><rect x="303.5" y="6.5" width="14" height="13" fill="#fdfdff" stroke="#8aa4c8" stroke-width="1"/><path d="M317.4,7 V19.4 H304" fill="none" stroke="#2a4868" stroke-width="1.5"/><line x1="305" y1="9.5" x2="311.5" y2="9.5" stroke="#f07a3a" stroke-width="1"/><line x1="305" y1="11.5" x2="311.5" y2="11.5" stroke="#f07a3a" stroke-width="1"/><line x1="305" y1="13.5" x2="311.5" y2="13.5" stroke="#f07a3a" stroke-width="1"/><line x1="305" y1="15.5" x2="309.5" y2="15.5" stroke="#f07a3a" stroke-width="1"/><path d="M312,11 H314.6 V15.5 H310.5" fill="none" stroke="#0a2a98" stroke-width="1.5"/><path d="M308,15.5 L311,13 V18 Z" fill="#0a2a98"/><line x1="345.29999999999995" y1="16.3" x2="348.9" y2="19.8" stroke="#c89a30" stroke-width="3" stroke-linecap="round"/><line x1="345.29999999999995" y1="16.3" x2="348.9" y2="19.8" stroke="#f0d070" stroke-width="1.2" stroke-linecap="round"/><circle cx="340.9" cy="11.8" r="5.2" fill="#edf2fb" stroke="#8c8c94" stroke-width="1.3"/><line x1="337.9" y1="11.8" x2="343.9" y2="11.8" stroke="#4a6a9c" stroke-width="1.8"/><line x1="340.9" y1="8.8" x2="340.9" y2="14.8" stroke="#4a6a9c" stroke-width="1.8"/><line x1="369.29999999999995" y1="16.3" x2="372.9" y2="19.8" stroke="#c89a30" stroke-width="3" stroke-linecap="round"/><line x1="369.29999999999995" y1="16.3" x2="372.9" y2="19.8" stroke="#f0d070" stroke-width="1.2" stroke-linecap="round"/><circle cx="364.9" cy="11.8" r="5.2" fill="#edf2fb" stroke="#8c8c94" stroke-width="1.3"/><line x1="361.9" y1="11.8" x2="367.9" y2="11.8" stroke="#4a6a9c" stroke-width="1.8"/><rect x="391.5" y="7.5" width="13" height="11" fill="#fdfdff" stroke="#5a86d8" stroke-width="1"/><rect x="391.5" y="7.5" width="13" height="2.6" fill="url(#gbar)"/><path d="M404.5,8 V18.5 H392" fill="none" stroke="#2c4c80" stroke-width="1.2"/><line x1="394" y1="11.8" x2="398.5" y2="11.8" stroke="#f06a3a" stroke-width="1"/><line x1="399.6" y1="11.8" x2="401.6" y2="11.8" stroke="#f06a3a" stroke-width="1"/><line x1="394" y1="13.8" x2="397.5" y2="13.8" stroke="#8090b0" stroke-width="1"/><line x1="399" y1="13.8" x2="401.6" y2="13.8" stroke="#6080b8" stroke-width="1"/><line x1="394" y1="15.8" x2="397.5" y2="15.8" stroke="#8090b0" stroke-width="1"/><line x1="399" y1="15.8" x2="402" y2="15.8" stroke="#f06a3a" stroke-width="1"/><path d="M414.3,5.6 L414.3,15.6 L424.6,15.6 Z" fill="#3c74e4" stroke="#1a3ea8" stroke-width="1"/><path d="M415.6,9.2 L415.6,14.4 L420.6,14.4 Z" fill="#6a9cf4"/><circle cx="416.8" cy="12.8" r="0.9" fill="#fff"/><rect x="414.5" y="16" width="15" height="3.8" fill="#f8dc80" stroke="#9a6c10" stroke-width="1"/><line x1="416.5" y1="16.5" x2="416.5" y2="18" stroke="#a07418" stroke-width="0.8"/><line x1="418.5" y1="16.5" x2="418.5" y2="18" stroke="#a07418" stroke-width="0.8"/><line x1="420.5" y1="16.5" x2="420.5" y2="18" stroke="#a07418" stroke-width="0.8"/><line x1="422.5" y1="16.5" x2="422.5" y2="18" stroke="#a07418" stroke-width="0.8"/><line x1="424.5" y1="16.5" x2="424.5" y2="18" stroke="#a07418" stroke-width="0.8"/><line x1="426.5" y1="16.5" x2="426.5" y2="18" stroke="#a07418" stroke-width="0.8"/><line x1="428.5" y1="16.5" x2="428.5" y2="18" stroke="#a07418" stroke-width="0.8"/><line x1="421" y1="14.2" x2="428.5" y2="6.6" stroke="#3a3020" stroke-width="3"/><line x1="421" y1="14.2" x2="428.5" y2="6.6" stroke="#f4dc8a" stroke-width="1.6"/><circle cx="429" cy="6" r="1.5" fill="#e07a7a"/><path d="M420,15.2 L421.2,13 L422.4,14.2 Z" fill="#fff"/><rect x="447.6" y="6.6" width="7.6" height="10.8" fill="#dae6f6" stroke="#7a6a4a" stroke-width="1.2"/><line x1="446" y1="17.4" x2="459" y2="17.4" stroke="#5e4e38" stroke-width="1.6"/><path d="M447.6,8 L452.6,9.6 L452.6,20.6 L447.6,18.2 Z" fill="#f2c21e" stroke="#8a6a10" stroke-width="0.9"/><path d="M455.6,11.5 L458.8,8.3 V10.2 H462 V12.8 H458.8 V14.7 Z" fill="#2a6ae8" stroke="#1a3ea0" stroke-width="0.5"/></svg></div>
  <div class=tbline></div>
  <div class=editor style="width:718px">
    <div class=gutter><div class=nm style="top:0px">1</div><div class=nm style="top:17px">2</div><div class=nm style="top:34px">3</div><div class=nm style="top:51px">4</div><div class=nm style="top:68px">5</div><div class=nm style="top:85px">6</div><div class=nm style="top:102px">7</div><div class=nm style="top:119px">8</div><div class=nm style="top:136px">9</div><div class=nm style="top:153px">10</div><div class=nm style="top:170px">11</div><div class=nm style="top:187px">12</div><div class=nm style="top:204px">13</div><div class=nm style="top:221px">14</div><div class=nm style="top:238px">15</div><div class=nm style="top:255px">16</div><div class=nm style="top:272px">17</div><div class=nm style="top:289px">18</div><div class=nm style="top:306px">19</div><div class=nm style="top:323px">20</div><div class=nm style="top:340px">21</div><div class=nm style="top:357px">22</div><div class=nm style="top:374px">23</div><div class=nm style="top:391px">24</div><div class=nm style="top:408px">25</div><div class=nm style="top:425px">26</div><div class=nm style="top:442px">27</div><div class=nm style="top:459px">28</div><div class=nm style="top:476px">29</div><div class=nm style="top:493px">30</div><div class=nm style="top:510px">31</div><div class=nm style="top:527px">32</div><div class=nm style="top:544px">33</div><div class=nm style="top:561px">34</div><div class=nm style="top:578px">35</div><div class=nm style="top:595px">36</div><div class=nm style="top:612px">37</div><div class=nm style="top:629px">38</div><div class=nm style="top:646px">39</div><div class=nm style="top:663px">40</div><div class=nm style="top:680px">41</div><div class=nm style="top:697px">42</div><div class=nm style="top:714px">43</div><div class=nm style="top:731px">44</div><div class=nm style="top:748px">45</div><div class=nm style="top:765px">46</div><div class=nm style="top:782px">47</div></div>
    <div class=code style="width:680px"><div class=ln style="top:0px"><b class=t>&lt;?</b><i class=t>xml</i> <i class=a>version</i><i class=e>=</i><i class=v>"1.0"</i> <i class=a>encoding</i><i class=e>=</i><i class=v>"utf-8"</i><b class=t>?&gt;</b></div><div class=ln style="top:17px"><i class=t>&lt;</i><i class=t>AssetPackage</i> <i class=a>Version</i><i class=e>=</i><i class=v>"0.1.0"</i><i class=t>&gt;</i></div><div class=ln style="top:34px">  <i class=t>&lt;</i><i class=t>ItemSettings</i><i class=t>&gt;</i></div><div class=ln style="top:51px">    <i class=t>&lt;</i><i class=t>ContentType</i><i class=t>&gt;</i>SCENERY<i class=t>&lt;/</i><i class=t>ContentType</i><i class=t>&gt;</i></div><div class=ln style="top:68px">    <i class=t>&lt;</i><i class=t>Title</i><i class=t>&gt;</i>Saint-Raymond-hiver-hiver<i class=t>&lt;/</i><i class=t>Title</i><i class=t>&gt;</i></div><div class=ln style="top:85px">    <i class=t>&lt;</i><i class=t>Manufacturer</i><i class=t>/&gt;</i></div><div class=ln style="top:102px">    <i class=t>&lt;</i><i class=t>Creator</i><i class=t>&gt;</i>Guillaume Plamondon<i class=t>&lt;/</i><i class=t>Creator</i><i class=t>&gt;</i></div><div class=ln style="top:119px">  <i class=t>&lt;/</i><i class=t>ItemSettings</i><i class=t>&gt;</i></div><div class=ln style="top:136px">  <i class=t>&lt;</i><i class=t>Flags</i><i class=t>&gt;</i></div><div class=ln style="top:153px">    <i class=t>&lt;</i><i class=t>VisibleInStore</i><i class=t>&gt;</i>false<i class=t>&lt;/</i><i class=t>VisibleInStore</i><i class=t>&gt;</i></div><div class=ln style="top:170px">    <i class=t>&lt;</i><i class=t>CanBeReferenced</i><i class=t>&gt;</i>false<i class=t>&lt;/</i><i class=t>CanBeReferenced</i><i class=t>&gt;</i></div><div class=ln style="top:187px">  <i class=t>&lt;/</i><i class=t>Flags</i><i class=t>&gt;</i></div><div class=ln style="top:204px">  <i class=t>&lt;</i><i class=t>PackageOrderHint</i><i class=t>&gt;</i>CUSTOM_AIRPORT<i class=t>&lt;/</i><i class=t>PackageOrderHint</i><i class=t>&gt;</i></div><div class=ln style="top:221px">  <i class=t>&lt;</i><i class=t>AssetGroups</i><i class=t>&gt;</i></div><div class=ln style="top:238px">    <i class=t>&lt;</i><i class=t>AssetGroup</i> <i class=a>Name</i><i class=e>=</i><i class=v>"Accueuil-Shannahan"</i><i class=t>&gt;</i></div><div class=ln style="top:255px">      <i class=t>&lt;</i><i class=t>Type</i> <i class=a>Version</i><i class=e>=</i><i class=v>"1"</i><i class=t>&gt;</i>ModelLib<i class=t>&lt;/</i><i class=t>Type</i><i class=t>&gt;</i></div><div class=ln style="top:272px">      <i class=t>&lt;</i><i class=t>Flags</i><i class=t>&gt;</i></div><div class=ln style="top:289px">        <i class=t>&lt;</i><i class=t>FSXCompatibility</i><i class=t>&gt;</i>false<i class=t>&lt;/</i><i class=t>FSXCompatibility</i><i class=t>&gt;</i></div><div class=ln style="top:306px">      <i class=t>&lt;/</i><i class=t>Flags</i><i class=t>&gt;</i></div><div class=ln style="top:323px">      <i class=t>&lt;</i><i class=t>AssetDir</i><i class=t>&gt;</i>PackageSources\Accueil Shannahan\<i class=t>&lt;/</i><i class=t>AssetDir</i><i class=t>&gt;</i></div><div class=ln style="top:340px">      <i class=t>&lt;</i><i class=t>OutputDir</i><i class=t>&gt;</i>Scenery\csk5-Saint-Raymond-hiver\Accueuil-Shannahan\<i class=t>&lt;/</i><i class=t>OutputDir</i><i class=t>&gt;</i></div><div class=ln style="top:357px">    <i class=t>&lt;/</i><i class=t>AssetGroup</i><i class=t>&gt;</i></div><div class=ln style="top:374px">    <i class=t>&lt;</i><i class=t>AssetGroup</i> <i class=a>Name</i><i class=e>=</i><i class=v>"BMR"</i><i class=t>&gt;</i></div><div class=ln style="top:391px">      <i class=t>&lt;</i><i class=t>Type</i> <i class=a>Version</i><i class=e>=</i><i class=v>"1"</i><i class=t>&gt;</i>ModelLib<i class=t>&lt;/</i><i class=t>Type</i><i class=t>&gt;</i></div><div class=ln style="top:408px">      <i class=t>&lt;</i><i class=t>Flags</i><i class=t>&gt;</i></div><div class=ln style="top:425px">        <i class=t>&lt;</i><i class=t>FSXCompatibility</i><i class=t>&gt;</i>false<i class=t>&lt;/</i><i class=t>FSXCompatibility</i><i class=t>&gt;</i></div><div class=ln style="top:442px">      <i class=t>&lt;/</i><i class=t>Flags</i><i class=t>&gt;</i></div><div class=ln style="top:459px">      <i class=t>&lt;</i><i class=t>AssetDir</i><i class=t>&gt;</i>PackageSources\BMR\<i class=t>&lt;/</i><i class=t>AssetDir</i><i class=t>&gt;</i></div><div class=ln style="top:476px">      <i class=t>&lt;</i><i class=t>OutputDir</i><i class=t>&gt;</i>Scenery\csk5-Saint-Raymond-hiver\BMR\<i class=t>&lt;/</i><i class=t>OutputDir</i><i class=t>&gt;</i></div><div class=ln style="top:493px">    <i class=t>&lt;/</i><i class=t>AssetGroup</i><i class=t>&gt;</i></div><div class=ln style="top:510px">    <i class=t>&lt;</i><i class=t>AssetGroup</i> <i class=a>Name</i><i class=e>=</i><i class=v>"Boack-rack-noir"</i><i class=t>&gt;</i></div><div class=ln style="top:527px">      <i class=t>&lt;</i><i class=t>Type</i> <i class=a>Version</i><i class=e>=</i><i class=v>"1"</i><i class=t>&gt;</i>ModelLib<i class=t>&lt;/</i><i class=t>Type</i><i class=t>&gt;</i></div><div class=ln style="top:544px">      <i class=t>&lt;</i><i class=t>Flags</i><i class=t>&gt;</i></div><div class=ln style="top:561px">        <i class=t>&lt;</i><i class=t>FSXCompatibility</i><i class=t>&gt;</i>false<i class=t>&lt;/</i><i class=t>FSXCompatibility</i><i class=t>&gt;</i></div><div class=ln style="top:578px">      <i class=t>&lt;/</i><i class=t>Flags</i><i class=t>&gt;</i></div><div class=ln style="top:595px">      <i class=t>&lt;</i><i class=t>AssetDir</i><i class=t>&gt;</i>PackageSources\Scenery\csk5-Saint-Raymond-hiver\Boack-rack-noir\<i class=t>&lt;/</i><i class=t>AssetDir</i><i class=t>&gt;</i></div><div class=ln style="top:612px">      <i class=t>&lt;</i><i class=t>OutputDir</i><i class=t>&gt;</i>Scenery\csk5-Saint-Raymond-hiver\Boack-rack-noir\<i class=t>&lt;/</i><i class=t>OutputDir</i><i class=t>&gt;</i></div><div class=ln style="top:629px">    <i class=t>&lt;/</i><i class=t>AssetGroup</i><i class=t>&gt;</i></div><div class=ln style="top:646px">    <i class=t>&lt;</i><i class=t>AssetGroup</i> <i class=a>Name</i><i class=e>=</i><i class=v>"Boat-tarp"</i><i class=t>&gt;</i></div><div class=ln style="top:663px">      <i class=t>&lt;</i><i class=t>Type</i> <i class=a>Version</i><i class=e>=</i><i class=v>"1"</i><i class=t>&gt;</i>ModelLib<i class=t>&lt;/</i><i class=t>Type</i><i class=t>&gt;</i></div><div class=ln style="top:680px">      <i class=t>&lt;</i><i class=t>Flags</i><i class=t>&gt;</i></div><div class=ln style="top:697px">        <i class=t>&lt;</i><i class=t>FSXCompatibility</i><i class=t>&gt;</i>false<i class=t>&lt;/</i><i class=t>FSXCompatibility</i><i class=t>&gt;</i></div><div class=ln style="top:714px">      <i class=t>&lt;/</i><i class=t>Flags</i><i class=t>&gt;</i></div><div class=ln style="top:731px">      <i class=t>&lt;</i><i class=t>AssetDir</i><i class=t>&gt;</i>PackageSources\Boat tarp\<i class=t>&lt;/</i><i class=t>AssetDir</i><i class=t>&gt;</i></div><div class=ln style="top:748px">      <i class=t>&lt;</i><i class=t>OutputDir</i><i class=t>&gt;</i>Scenery\csk5-Saint-Raymond-hiver\Boat-tarp\<i class=t>&lt;/</i><i class=t>OutputDir</i><i class=t>&gt;</i></div><div class=ln style="top:765px">    <i class=t>&lt;/</i><i class=t>AssetGroup</i><i class=t>&gt;</i></div><div class=ln style="top:782px">    <i class=t>&lt;</i><i class=t>AssetGroup</i> <i class=a>Name</i><i class=e>=</i><i class=v>"Canoe-wooden"</i><i class=t>&gt;</i></div></div>
    <div class=box style="left:190px;top:199px;width:121px;height:28px"></div>
    <i class=dot style="left:206px"></i><i class=dot style="left:209px"></i><i class=dot style="left:288px"></i><i class=dot style="left:310px"></i><i class=dot style="left:313px"></i>
  </div>
  <div class=vscroll style="left:718px;height:786px"><div style="position:absolute;left:7px;top:17px;width:2px;height:77px;background:#828282"></div></div>
  <div class=hscroll style="width:718px"><div class=hthumb style="width:227px"></div></div>
  <div class=status><span style="left:2px">Ln 13 : 450&nbsp;&nbsp;&nbsp;Col 35&nbsp;&nbsp;&nbsp;Sel 0</span><i class=sep style="left:243px"></i><span style="left:248px">15.7 KB</span><i class=sep style="left:331px"></i><span style="left:336px">UTF-8</span><i class=sep style="left:430px"></i><span style="left:435px">LF</span><i class=sep style="left:474px"></i><span style="left:479px">INS</span><i class=sep style="left:506px"></i><span style="left:511px">XML Document</span></div>
  <svg width="10" height="10" style="position:absolute;left:724px;top:892px"><rect x="6" y="0" width="1.6" height="1.6" fill="#9a9aa8"/><rect x="6" y="3" width="1.6" height="1.6" fill="#9a9aa8"/><rect x="3" y="3" width="1.6" height="1.6" fill="#9a9aa8"/><rect x="6" y="6" width="1.6" height="1.6" fill="#9a9aa8"/><rect x="3" y="6" width="1.6" height="1.6" fill="#9a9aa8"/><rect x="0" y="6" width="1.6" height="1.6" fill="#9a9aa8"/></svg><div style="position:absolute;left:730px;top:897px;width:4px;height:5px;background:#3a2414;border-top-left-radius:4px"></div>
</div><div class=divider></div><div style='position:absolute;left:0;top:0;width:3px;height:5px;background:#2a1a14;border-bottom-right-radius:3px'></div><div style='position:absolute;left:1474px;top:0;width:4px;height:6px;background:#4a2a14;border-bottom-left-radius:4px'></div><svg style="position:absolute;left:0;top:0" width="1478" height="902"><g stroke="#f00" stroke-width="5" fill="none"><line x1="544" y1="290" x2="790" y2="290"/><polyline points="771,274.5 789.5,286.8 769.5,305"/></g></svg></body></html>
